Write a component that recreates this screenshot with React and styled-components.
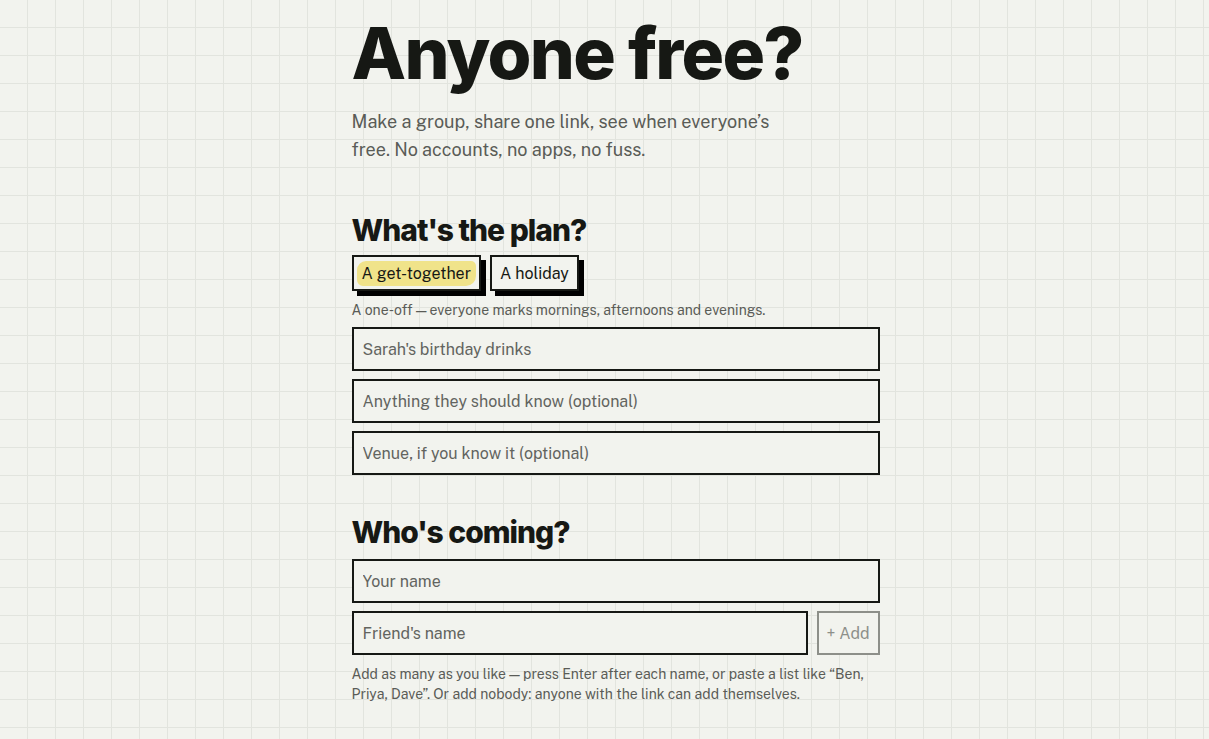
import React, { useState } from "react";
import styled, { createGlobalStyle } from "styled-components";

const GlobalStyle = createGlobalStyle`
  html, body {
    margin: 0;
    padding: 0;
  }
  body {
    background-color: #f2f3ee;
    background-image:
      linear-gradient(to right, transparent 27px, #e2e4de 27px, #e2e4de 28px),
      linear-gradient(to bottom, transparent 27px, #e2e4de 27px, #e2e4de 28px);
    background-size: 28px 28px;
    font-family: "Public Sans", "Inter", "Liberation Sans", sans-serif;
    color: #161814;
    min-height: 100vh;
  }
`;

const Page = styled.main`
  width: 528px;
  margin-left: calc(50% - 253px);
  padding: 18px 0 40px;
`;

const Title = styled.h1`
  margin: 0;
  font-family: "Inter", "Liberation Sans", sans-serif;
  font-size: 71px;
  font-weight: 800;
  letter-spacing: -1.7px;
  line-height: 1;
  color: #161814;
`;

const Lede = styled.p`
  margin: 19px 0 0;
  width: 430px;
  font-size: 18px;
  line-height: 28px;
  color: #5a5c57;
`;

const Section = styled.section`
  margin-top: ${(p) => p.$gap}px;
  display: flex;
  flex-direction: column;
`;

const Heading = styled.h2`
  margin: 0 0 ${(p) => p.$below || 8}px;
  font-family: "Inter", "Liberation Sans", sans-serif;
  font-size: 30px;
  font-weight: 800;
  letter-spacing: -1px;
  line-height: 36px;
  color: #161814;
`;

const ChipRow = styled.div`
  display: flex;
  gap: 9px;
`;

const Chip = styled.button`
  height: 36px;
  padding: 0 3px;
  border: 2px solid #161814;
  background: #f2f3ee;
  box-shadow: 5px 5px 0 #000;
  font-family: inherit;
  font-size: 16px;
  color: #161814;
  cursor: pointer;
  display: flex;
  align-items: center;
`;

const Mark = styled.span`
  padding: 3px 5px;
  border-radius: 9px 5px 10px 6px;
  background: ${(p) => (p.$on ? "#f0e38a" : "transparent")};
`;

const Hint = styled.p`
  margin: ${(p) => p.$top || 8}px 0 0;
  font-size: 14px;
  line-height: 20px;
  color: #5a5c57;
`;

const Fields = styled.div`
  display: flex;
  flex-direction: column;
  gap: 8px;
  margin-top: ${(p) => p.$top || 0}px;
`;

const Row = styled.div`
  display: flex;
  gap: 9px;
`;

const Input = styled.input`
  flex: ${(p) => (p.$grow ? "1 1 auto" : "none")};
  min-width: 0;
  height: 44px;
  box-sizing: border-box;
  padding: 0 9px;
  border: 2px solid #161814;
  border-radius: 0;
  background: #f2f3ee;
  font-family: inherit;
  font-size: 16px;
  color: #161814;
  outline: none;
  &::placeholder {
    color: #62645f;
  }
`;

const AddButton = styled.button`
  flex: none;
  width: 63px;
  height: 44px;
  border: 2px solid #8d8f89;
  background: #f2f3ee;
  font-family: inherit;
  font-size: 16px;
  color: #8d8f89;
  padding: 0;
`;

export default function App() {
  const [kind, setKind] = useState("together");

  return (
    <>
      <GlobalStyle />
      <Page>
        <Title>Anyone free?</Title>
        <Lede>
          Make a group, share one link, see when everyone’s free. No accounts,
          no apps, no fuss.
        </Lede>

        <Section $gap={48}>
          <Heading $below={7}>What's the plan?</Heading>
          <ChipRow>
            <Chip onClick={() => setKind("together")}>
              <Mark $on={kind === "together"}>A get-together</Mark>
            </Chip>
            <Chip onClick={() => setKind("holiday")}>
              <Mark $on={kind === "holiday"}>A holiday</Mark>
            </Chip>
          </ChipRow>
          <Hint $top={9}>
            A one-off — everyone marks mornings, afternoons and evenings.
          </Hint>
          <Fields $top={7}>
            <Input placeholder="Sarah's birthday drinks" />
            <Input placeholder="Anything they should know (optional)" />
            <Input placeholder="Venue, if you know it (optional)" />
          </Fields>
        </Section>

        <Section $gap={39}>
          <Heading $below={9}>Who's coming?</Heading>
          <Fields>
            <Input placeholder="Your name" />
            <Row>
              <Input $grow placeholder="Friend's name" />
              <AddButton>+ Add</AddButton>
            </Row>
          </Fields>
          <Hint $top={9}>
            Add as many as you like — press Enter after each name, or paste a
            list like “Ben, Priya, Dave”. Or add nobody: anyone with the link
            can add themselves.
          </Hint>
        </Section>
      </Page>
    </>
  );
}
